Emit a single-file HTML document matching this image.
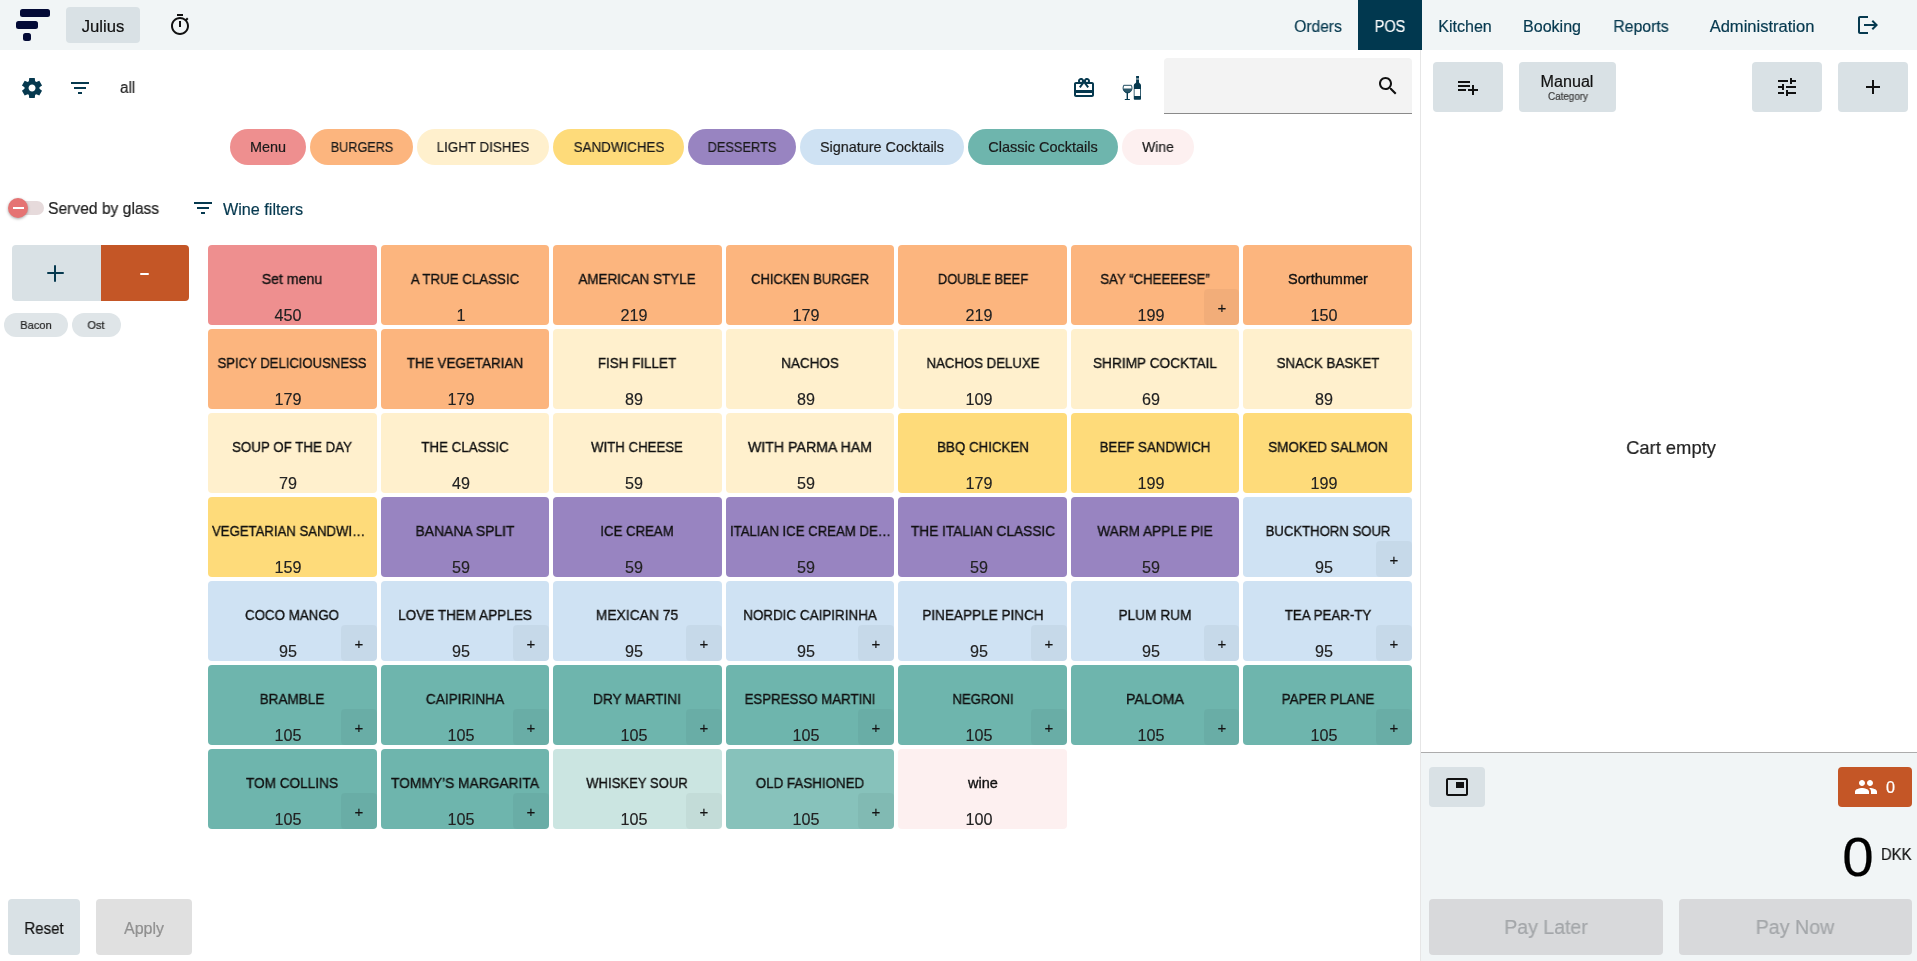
<!DOCTYPE html>
<html lang="en"><head><meta charset="utf-8"><title>POS</title>
<style>
html,body{margin:0;padding:0;}
body{width:1917px;height:961px;position:relative;overflow:hidden;background:#fff;font-family:"Liberation Sans",sans-serif;color:#111;font-size:16px;}
.abs,.ic,.t{position:absolute;}
.t{white-space:nowrap;will-change:transform;-webkit-text-stroke:0.2px currentColor;}
#hdr{left:0;top:0;width:1917px;height:50px;background:#f1f5f6;}
.pill{top:129px;height:36px;border-radius:18px;}
.btn{background:#d9e1e5;border-radius:4px;}
.tile{position:absolute;width:168.57px;height:80px;border-radius:4px;overflow:hidden;}
.tile .t{-webkit-text-stroke:0.35px #111;}
.tile .p{-webkit-text-stroke:0;}
.tile .a{position:absolute;right:0;bottom:0;width:35.8px;height:35.8px;border-radius:4px;background:rgba(0,0,0,0.04);}
.tile .a i{position:absolute;background:#111;}
</style></head><body>

<header>
<div id="hdr" class="abs"></div>
<div class="abs" style="left:20px;top:9px;width:30px;height:7.5px;border-radius:2.5px;background:#030a36"></div>
<div class="abs" style="left:16px;top:21.3px;width:22px;height:7.5px;border-radius:2.5px;background:#030a36"></div>
<div class="abs" style="left:23px;top:33.4px;width:8px;height:7.5px;border-radius:2.5px;background:#030a36"></div>
<div class="abs btn" style="left:66px;top:7px;width:74px;height:36px"></div>
<div class="t" style="top:19.46px;font-size:16px;line-height:16px;color:#111;left:103.30px;transform:translateX(-50%) scaleX(1.0386);">Julius</div>
<svg class="ic" style="left:168px;top:13px" width="24" height="24" viewBox="0 0 24 24"><path fill="#111" d="M15 1H9v2h6V1zm-4 13h2V8h-2v6zm8.03-6.61l1.42-1.42c-.43-.51-.9-.99-1.41-1.41l-1.42 1.42C16.07 4.74 14.12 4 12 4c-4.97 0-9 4.03-9 9s4.02 9 9 9 9-4.03 9-9c0-2.12-.74-4.07-1.97-5.61zM12 20c-3.87 0-7-3.13-7-7s3.13-7 7-7 7 3.13 7 7-3.13 7-7 7z"/></svg>
<div class="abs" style="left:1358px;top:0;width:64px;height:50px;background:#01384f"></div>
<nav>
<div class="t" style="top:19.46px;font-size:16px;line-height:16px;color:#06394f;left:1317.90px;transform:translateX(-50%) scaleX(0.9726);">Orders</div>
<div class="t" style="top:19.46px;font-size:16px;line-height:16px;color:#fff;left:1389.60px;transform:translateX(-50%) scaleX(0.9053);">POS</div>
<div class="t" style="top:19.46px;font-size:16px;line-height:16px;color:#06394f;left:1464.60px;transform:translateX(-50%) scaleX(1.0051);">Kitchen</div>
<div class="t" style="top:19.46px;font-size:16px;line-height:16px;color:#06394f;left:1552.10px;transform:translateX(-50%) scaleX(1.0033);">Booking</div>
<div class="t" style="top:19.46px;font-size:16px;line-height:16px;color:#06394f;left:1640.90px;transform:translateX(-50%) scaleX(0.9875);">Reports</div>
<div class="t" style="top:19.46px;font-size:16px;line-height:16px;color:#06394f;left:1762.40px;transform:translateX(-50%) scaleX(1.0329);">Administration</div>
</nav>
<svg class="ic" style="left:1856px;top:13px" width="24" height="24" viewBox="0 0 24 24"><path fill="#06394f" d="M17 7l-1.41 1.41L18.17 11H8v2h10.17l-2.58 2.58L17 17l5-5zM4 5h8V3H4c-1.1 0-2 .9-2 2v14c0 1.1.9 2 2 2h8v-2H4V5z"/></svg>
</header>
<main>
<svg class="ic" style="left:20px;top:76px" width="24" height="24" viewBox="0 -960 960 960"><path fill="#06394f" d="m370-80-16-128q-13-5-24.500-12T307-235l-119 50L78-375l103-78q-1-7-1-13.500v-27q0-6.500 1-13.500L78-585l110-190 119 50q11-8 23-15t24-12l16-128h220l16 128q13 5 24.500 12t22.500 15l119-50 110 190-103 78q1 7 1 13.500v27q0 6.500-2 13.500l103 78-110 190-118-50q-11 8-23 15t-24 12L590-80H370Zm112-260q58 0 99-41t41-99q0-58-41-99t-99-41q-59 0-99.500 41T342-480q0 58 40.500 99t99.500 41Z"/></svg>
<svg class="ic" style="left:68px;top:76px" width="24" height="24" viewBox="0 0 24 24"><path fill="#06394f" d="M10 18h4v-2h-4v2zM3 6v2h18V6H3zm3 7h12v-2H6v2z"/></svg>
<div class="t" style="top:80.46px;font-size:16px;line-height:16px;color:#222;left:119.70px;transform-origin:0 50%;transform:scaleX(0.9500);">all</div>
<svg class="ic" style="left:1072px;top:76px" width="24" height="24" viewBox="0 0 24 24"><path fill="#06394f" d="M20 6h-2.18c.11-.31.18-.65.18-1 0-1.66-1.34-3-3-3-1.05 0-1.96.54-2.5 1.35l-.5.67-.5-.68C10.96 2.54 10.05 2 9 2 7.34 2 6 3.34 6 5c0 .35.07.69.18 1H4c-1.11 0-1.99.89-1.99 2L2 19c0 1.11.89 2 2 2h16c1.11 0 2-.89 2-2V8c0-1.11-.89-2-2-2zm-5-2c.55 0 1 .45 1 1s-.45 1-1 1-1-.45-1-1 .45-1 1-1zM9 4c.55 0 1 .45 1 1s-.45 1-1 1-1-.45-1-1 .45-1 1-1zm11 15H4v-2h16v2zm0-5H4V8h5.08L7 10.83 8.62 12 11 8.76l1-1.36 1 1.36L15.38 12 17 10.83 14.92 8H20v6z"/></svg>
<svg class="ic" style="left:1120px;top:74px" width="24" height="28" viewBox="0 0 24 28">
<path fill="none" stroke="#06394f" stroke-width="0.9" d="M3.700 11.300h7.700c1 2.300.8 4.900-.9 6.400-.9.800-1.900 1.200-2.950 1.200s-2.050-.4-2.950-1.200c-1.700-1.500-1.900-4.100-.9-6.400z"/>
<path fill="#06394f" fill-opacity="0.85" d="M3.300 14.400h8.500c0 1.300-.4 2.500-1.300 3.400-.9.800-1.900 1.200-2.950 1.200s-2.050-.4-2.950-1.200c-.9-.9-1.300-2.100-1.300-3.400z"/>
<rect x="6.600" y="18.600" width="1.400" height="6.600" fill="#06394f"/>
<rect x="4.700" y="24.900" width="5.300" height="1.100" rx="0.550" fill="#06394f"/>
<path fill="#06394f" d="M16.100 2h2.900v6.300c0 .9 2 1.500 2 3.200v13.500c0 .5-.3.800-.8.800h-5.600c-.5 0-.8-.3-.8-.8V11.500c0-1.700 2.300-2.300 2.300-3.200z"/>
<rect x="14.700" y="15" width="5.500" height="7" fill="#fff"/>
<rect x="13.800" y="15" width="0.900" height="7" fill="#93a9b3"/>
<rect x="16.100" y="4.100" width="2.900" height="1.700" fill="#7f99a5"/>
</svg>
<div class="abs" style="left:1164px;top:58px;width:248px;height:56px;background:#f3f3f3;border-radius:4px 4px 0 0;border-bottom:1px solid #8a8a8a;box-sizing:border-box"></div>
<svg class="ic" style="left:1375.5px;top:73.7px" width="24" height="24" viewBox="0 0 24 24"><path fill="#111" d="M15.5 14h-.79l-.28-.27C15.41 12.59 16 11.11 16 9.5 16 5.91 13.09 3 9.5 3S3 5.91 3 9.5 5.91 16 9.5 16c1.61 0 3.09-.59 4.23-1.57l.27.28v.79l5 4.99L20.49 19l-4.99-5zm-6 0C7.01 14 5 11.99 5 9.5S7.01 5 9.5 5 14 7.01 14 9.5 11.99 14 9.5 14z"/></svg>
<div class="abs pill" style="left:230px;width:76px;background:#ee8f8f"></div>
<div class="t" style="top:139.81px;font-size:14.4px;line-height:14.4px;color:#1a1a1a;left:268.00px;transform:translateX(-50%) scaleX(1.0018);">Menu</div>
<div class="abs pill" style="left:310px;width:103px;background:#fcb57e"></div>
<div class="t" style="top:139.81px;font-size:14.4px;line-height:14.4px;color:#1a1a1a;left:361.50px;transform:translateX(-50%) scaleX(0.8787);">BURGERS</div>
<div class="abs pill" style="left:417px;width:132px;background:#fff0cd"></div>
<div class="t" style="top:139.81px;font-size:14.4px;line-height:14.4px;color:#1a1a1a;left:483.00px;transform:translateX(-50%) scaleX(0.9304);">LIGHT DISHES</div>
<div class="abs pill" style="left:553px;width:131px;background:#fedb7a"></div>
<div class="t" style="top:139.81px;font-size:14.4px;line-height:14.4px;color:#1a1a1a;left:618.50px;transform:translateX(-50%) scaleX(0.9293);">SANDWICHES</div>
<div class="abs pill" style="left:688px;width:108px;background:#9884c1"></div>
<div class="t" style="top:139.81px;font-size:14.4px;line-height:14.4px;color:#1a1a1a;left:742.00px;transform:translateX(-50%) scaleX(0.8907);">DESSERTS</div>
<div class="abs pill" style="left:800px;width:164px;background:#cfe2f3"></div>
<div class="t" style="top:139.81px;font-size:14.4px;line-height:14.4px;color:#1a1a1a;left:882.00px;transform:translateX(-50%) scaleX(0.9994);">Signature Cocktails</div>
<div class="abs pill" style="left:968px;width:150px;background:#6eb5ad"></div>
<div class="t" style="top:139.81px;font-size:14.4px;line-height:14.4px;color:#1a1a1a;left:1043.00px;transform:translateX(-50%) scaleX(1.0065);">Classic Cocktails</div>
<div class="abs pill" style="left:1122px;width:72px;background:#fdf0f0"></div>
<div class="t" style="top:139.81px;font-size:14.4px;line-height:14.4px;color:#1a1a1a;left:1158.00px;transform:translateX(-50%) scaleX(0.9707);">Wine</div>
<div class="abs" style="left:12px;top:201.4px;width:32px;height:13.4px;border-radius:7px;background:#e6dadb"></div>
<div class="abs" style="left:8px;top:198px;width:20px;height:20px;border-radius:50%;background:#e57373;box-shadow:0 1px 3px rgba(0,0,0,.35)"></div>
<div class="abs" style="left:12.5px;top:206.8px;width:11.4px;height:2.4px;background:#fff"></div>
<div class="t" style="top:201.46px;font-size:16px;line-height:16px;color:#222;left:47.70px;transform-origin:0 50%;transform:scaleX(0.9764);">Served by glass</div>
<svg class="ic" style="left:191.2px;top:196px" width="24" height="24" viewBox="0 0 24 24"><path fill="#06394f" d="M10 18h4v-2h-4v2zM3 6v2h18V6H3zm3 7h12v-2H6v2z"/></svg>
<div class="t" style="top:202.16px;font-size:16px;line-height:16px;color:#06394f;left:223.30px;transform-origin:0 50%;transform:scaleX(1.0115);">Wine filters</div>
<div class="abs" style="left:12px;top:245px;width:89px;height:56px;background:#d9e1e5;border-radius:4px 0 0 4px"></div>
<div class="abs" style="left:101px;top:245px;width:88px;height:56px;background:#c45626;border-radius:0 4px 4px 0"></div>
<div class="abs" style="left:47.2px;top:272px;width:16.4px;height:2.2px;border-radius:1px;background:#06394f"></div><div class="abs" style="left:54.3px;top:265px;width:2.2px;height:16.8px;border-radius:1px;background:#06394f"></div>
<div class="abs" style="left:140.2px;top:272.7px;width:9px;height:2.5px;border-radius:1.2px;background:#fff"></div>
<div class="abs" style="left:4px;top:313px;width:64px;height:24px;border-radius:12px;background:#dfe5e8"></div>
<div class="t" style="top:319.72px;font-size:11.2px;line-height:11.2px;color:#222;left:36.00px;transform:translateX(-50%) scaleX(0.9918);">Bacon</div>
<div class="abs" style="left:72px;top:313px;width:49px;height:24px;border-radius:12px;background:#dfe5e8"></div>
<div class="t" style="top:319.72px;font-size:11.2px;line-height:11.2px;color:#222;left:96.00px;transform:translateX(-50%) scaleX(0.9834);">Ost</div>
<div class="tile" style="left:208.00px;top:245px;background:#ee8f8f"><div class="t" style="top:26.81px;font-size:14.4px;line-height:14.4px;color:#111;left:84.28px;transform:translateX(-50%) scaleX(0.9829);">Set menu</div><div class="t" style="top:63.46px;font-size:16px;line-height:16px;color:#222;left:80.38px;transform:translateX(-50%) scaleX(1.0096);-webkit-text-stroke:0.15px #222;">450</div></div>
<div class="tile" style="left:380.57px;top:245px;background:#fcb57e"><div class="t" style="top:26.81px;font-size:14.4px;line-height:14.4px;color:#111;left:84.28px;transform:translateX(-50%) scaleX(0.9235);">A TRUE CLASSIC</div><div class="t" style="top:63.46px;font-size:16px;line-height:16px;color:#222;left:80.38px;transform:translateX(-50%) scaleX(1.0096);-webkit-text-stroke:0.15px #222;">1</div></div>
<div class="tile" style="left:553.14px;top:245px;background:#fcb57e"><div class="t" style="top:26.81px;font-size:14.4px;line-height:14.4px;color:#111;left:84.28px;transform:translateX(-50%) scaleX(0.9332);">AMERICAN STYLE</div><div class="t" style="top:63.46px;font-size:16px;line-height:16px;color:#222;left:80.38px;transform:translateX(-50%) scaleX(1.0096);-webkit-text-stroke:0.15px #222;">219</div></div>
<div class="tile" style="left:725.72px;top:245px;background:#fcb57e"><div class="t" style="top:26.81px;font-size:14.4px;line-height:14.4px;color:#111;left:84.28px;transform:translateX(-50%) scaleX(0.9049);">CHICKEN BURGER</div><div class="t" style="top:63.46px;font-size:16px;line-height:16px;color:#222;left:80.38px;transform:translateX(-50%) scaleX(1.0096);-webkit-text-stroke:0.15px #222;">179</div></div>
<div class="tile" style="left:898.29px;top:245px;background:#fcb57e"><div class="t" style="top:26.81px;font-size:14.4px;line-height:14.4px;color:#111;left:84.28px;transform:translateX(-50%) scaleX(0.8969);">DOUBLE BEEF</div><div class="t" style="top:63.46px;font-size:16px;line-height:16px;color:#222;left:80.38px;transform:translateX(-50%) scaleX(1.0096);-webkit-text-stroke:0.15px #222;">219</div></div>
<div class="tile" style="left:1070.86px;top:245px;background:#fcb57e"><div class="t" style="top:26.81px;font-size:14.4px;line-height:14.4px;color:#111;left:84.28px;transform:translateX(-50%) scaleX(0.9161);">SAY “CHEEEESE”</div><div class="t" style="top:63.46px;font-size:16px;line-height:16px;color:#222;left:80.38px;transform:translateX(-50%) scaleX(1.0096);-webkit-text-stroke:0.15px #222;">199</div><div class="a"></div><div class="t" style="top:54.80px;font-size:15px;line-height:15px;color:#111;left:150.77px;transform:translateX(-50%) scaleX(1.0000);-webkit-text-stroke:0.15px #222;">+</div></div>
<div class="tile" style="left:1243.43px;top:245px;background:#fcb57e"><div class="t" style="top:26.81px;font-size:14.4px;line-height:14.4px;color:#111;left:84.28px;transform:translateX(-50%) scaleX(1.0092);">Sorthummer</div><div class="t" style="top:63.46px;font-size:16px;line-height:16px;color:#222;left:80.38px;transform:translateX(-50%) scaleX(1.0096);-webkit-text-stroke:0.15px #222;">150</div></div>
<div class="tile" style="left:208.00px;top:329px;background:#fcb57e"><div class="t" style="top:26.81px;font-size:14.4px;line-height:14.4px;color:#111;left:84.28px;transform:translateX(-50%) scaleX(0.9099);">SPICY DELICIOUSNESS</div><div class="t" style="top:63.46px;font-size:16px;line-height:16px;color:#222;left:80.38px;transform:translateX(-50%) scaleX(1.0096);-webkit-text-stroke:0.15px #222;">179</div></div>
<div class="tile" style="left:380.57px;top:329px;background:#fcb57e"><div class="t" style="top:26.81px;font-size:14.4px;line-height:14.4px;color:#111;left:84.28px;transform:translateX(-50%) scaleX(0.9344);">THE VEGETARIAN</div><div class="t" style="top:63.46px;font-size:16px;line-height:16px;color:#222;left:80.38px;transform:translateX(-50%) scaleX(1.0096);-webkit-text-stroke:0.15px #222;">179</div></div>
<div class="tile" style="left:553.14px;top:329px;background:#fff0cd"><div class="t" style="top:26.81px;font-size:14.4px;line-height:14.4px;color:#111;left:84.28px;transform:translateX(-50%) scaleX(0.9332);">FISH FILLET</div><div class="t" style="top:63.46px;font-size:16px;line-height:16px;color:#222;left:80.38px;transform:translateX(-50%) scaleX(1.0096);-webkit-text-stroke:0.15px #222;">89</div></div>
<div class="tile" style="left:725.72px;top:329px;background:#fff0cd"><div class="t" style="top:26.81px;font-size:14.4px;line-height:14.4px;color:#111;left:84.28px;transform:translateX(-50%) scaleX(0.9373);">NACHOS</div><div class="t" style="top:63.46px;font-size:16px;line-height:16px;color:#222;left:80.38px;transform:translateX(-50%) scaleX(1.0096);-webkit-text-stroke:0.15px #222;">89</div></div>
<div class="tile" style="left:898.29px;top:329px;background:#fff0cd"><div class="t" style="top:26.81px;font-size:14.4px;line-height:14.4px;color:#111;left:84.28px;transform:translateX(-50%) scaleX(0.9189);">NACHOS DELUXE</div><div class="t" style="top:63.46px;font-size:16px;line-height:16px;color:#222;left:80.38px;transform:translateX(-50%) scaleX(1.0096);-webkit-text-stroke:0.15px #222;">109</div></div>
<div class="tile" style="left:1070.86px;top:329px;background:#fff0cd"><div class="t" style="top:26.81px;font-size:14.4px;line-height:14.4px;color:#111;left:84.28px;transform:translateX(-50%) scaleX(0.9499);">SHRIMP COCKTAIL</div><div class="t" style="top:63.46px;font-size:16px;line-height:16px;color:#222;left:80.38px;transform:translateX(-50%) scaleX(1.0096);-webkit-text-stroke:0.15px #222;">69</div></div>
<div class="tile" style="left:1243.43px;top:329px;background:#fff0cd"><div class="t" style="top:26.81px;font-size:14.4px;line-height:14.4px;color:#111;left:84.28px;transform:translateX(-50%) scaleX(0.9315);">SNACK BASKET</div><div class="t" style="top:63.46px;font-size:16px;line-height:16px;color:#222;left:80.38px;transform:translateX(-50%) scaleX(1.0096);-webkit-text-stroke:0.15px #222;">89</div></div>
<div class="tile" style="left:208.00px;top:413px;background:#fff0cd"><div class="t" style="top:26.81px;font-size:14.4px;line-height:14.4px;color:#111;left:84.28px;transform:translateX(-50%) scaleX(0.9253);">SOUP OF THE DAY</div><div class="t" style="top:63.46px;font-size:16px;line-height:16px;color:#222;left:80.38px;transform:translateX(-50%) scaleX(1.0096);-webkit-text-stroke:0.15px #222;">79</div></div>
<div class="tile" style="left:380.57px;top:413px;background:#fff0cd"><div class="t" style="top:26.81px;font-size:14.4px;line-height:14.4px;color:#111;left:84.28px;transform:translateX(-50%) scaleX(0.9267);">THE CLASSIC</div><div class="t" style="top:63.46px;font-size:16px;line-height:16px;color:#222;left:80.38px;transform:translateX(-50%) scaleX(1.0096);-webkit-text-stroke:0.15px #222;">49</div></div>
<div class="tile" style="left:553.14px;top:413px;background:#fff0cd"><div class="t" style="top:26.81px;font-size:14.4px;line-height:14.4px;color:#111;left:84.28px;transform:translateX(-50%) scaleX(0.9186);">WITH CHEESE</div><div class="t" style="top:63.46px;font-size:16px;line-height:16px;color:#222;left:80.38px;transform:translateX(-50%) scaleX(1.0096);-webkit-text-stroke:0.15px #222;">59</div></div>
<div class="tile" style="left:725.72px;top:413px;background:#fff0cd"><div class="t" style="top:26.81px;font-size:14.4px;line-height:14.4px;color:#111;left:84.28px;transform:translateX(-50%) scaleX(0.9848);">WITH PARMA HAM</div><div class="t" style="top:63.46px;font-size:16px;line-height:16px;color:#222;left:80.38px;transform:translateX(-50%) scaleX(1.0096);-webkit-text-stroke:0.15px #222;">59</div></div>
<div class="tile" style="left:898.29px;top:413px;background:#fedb7a"><div class="t" style="top:26.81px;font-size:14.4px;line-height:14.4px;color:#111;left:84.28px;transform:translateX(-50%) scaleX(0.9254);">BBQ CHICKEN</div><div class="t" style="top:63.46px;font-size:16px;line-height:16px;color:#222;left:80.38px;transform:translateX(-50%) scaleX(1.0096);-webkit-text-stroke:0.15px #222;">179</div></div>
<div class="tile" style="left:1070.86px;top:413px;background:#fedb7a"><div class="t" style="top:26.81px;font-size:14.4px;line-height:14.4px;color:#111;left:84.28px;transform:translateX(-50%) scaleX(0.9236);">BEEF SANDWICH</div><div class="t" style="top:63.46px;font-size:16px;line-height:16px;color:#222;left:80.38px;transform:translateX(-50%) scaleX(1.0096);-webkit-text-stroke:0.15px #222;">199</div></div>
<div class="tile" style="left:1243.43px;top:413px;background:#fedb7a"><div class="t" style="top:26.81px;font-size:14.4px;line-height:14.4px;color:#111;left:84.28px;transform:translateX(-50%) scaleX(0.9405);">SMOKED SALMON</div><div class="t" style="top:63.46px;font-size:16px;line-height:16px;color:#222;left:80.38px;transform:translateX(-50%) scaleX(1.0096);-webkit-text-stroke:0.15px #222;">199</div></div>
<div class="tile" style="left:208.00px;top:497px;background:#fedb7a"><div class="t" style="top:26.81px;font-size:14.4px;line-height:14.4px;color:#111;left:4.00px;transform-origin:0 50%;transform:scaleX(0.9139);">VEGETARIAN SANDWI…</div><div class="t" style="top:63.46px;font-size:16px;line-height:16px;color:#222;left:80.38px;transform:translateX(-50%) scaleX(1.0096);-webkit-text-stroke:0.15px #222;">159</div></div>
<div class="tile" style="left:380.57px;top:497px;background:#9884c1"><div class="t" style="top:26.81px;font-size:14.4px;line-height:14.4px;color:#111;left:84.28px;transform:translateX(-50%) scaleX(0.9676);">BANANA SPLIT</div><div class="t" style="top:63.46px;font-size:16px;line-height:16px;color:#222;left:80.38px;transform:translateX(-50%) scaleX(1.0096);-webkit-text-stroke:0.15px #222;">59</div></div>
<div class="tile" style="left:553.14px;top:497px;background:#9884c1"><div class="t" style="top:26.81px;font-size:14.4px;line-height:14.4px;color:#111;left:84.28px;transform:translateX(-50%) scaleX(0.9177);">ICE CREAM</div><div class="t" style="top:63.46px;font-size:16px;line-height:16px;color:#222;left:80.38px;transform:translateX(-50%) scaleX(1.0096);-webkit-text-stroke:0.15px #222;">59</div></div>
<div class="tile" style="left:725.72px;top:497px;background:#9884c1"><div class="t" style="top:26.81px;font-size:14.4px;line-height:14.4px;color:#111;left:4.00px;transform-origin:0 50%;transform:scaleX(0.9163);">ITALIAN ICE CREAM DE…</div><div class="t" style="top:63.46px;font-size:16px;line-height:16px;color:#222;left:80.38px;transform:translateX(-50%) scaleX(1.0096);-webkit-text-stroke:0.15px #222;">59</div></div>
<div class="tile" style="left:898.29px;top:497px;background:#9884c1"><div class="t" style="top:26.81px;font-size:14.4px;line-height:14.4px;color:#111;left:84.28px;transform:translateX(-50%) scaleX(0.9507);">THE ITALIAN CLASSIC</div><div class="t" style="top:63.46px;font-size:16px;line-height:16px;color:#222;left:80.38px;transform:translateX(-50%) scaleX(1.0096);-webkit-text-stroke:0.15px #222;">59</div></div>
<div class="tile" style="left:1070.86px;top:497px;background:#9884c1"><div class="t" style="top:26.81px;font-size:14.4px;line-height:14.4px;color:#111;left:84.28px;transform:translateX(-50%) scaleX(0.9468);">WARM APPLE PIE</div><div class="t" style="top:63.46px;font-size:16px;line-height:16px;color:#222;left:80.38px;transform:translateX(-50%) scaleX(1.0096);-webkit-text-stroke:0.15px #222;">59</div></div>
<div class="tile" style="left:1243.43px;top:497px;background:#cfe2f3"><div class="t" style="top:26.81px;font-size:14.4px;line-height:14.4px;color:#111;left:84.28px;transform:translateX(-50%) scaleX(0.9123);">BUCKTHORN SOUR</div><div class="t" style="top:63.46px;font-size:16px;line-height:16px;color:#222;left:80.38px;transform:translateX(-50%) scaleX(1.0096);-webkit-text-stroke:0.15px #222;">95</div><div class="a"></div><div class="t" style="top:54.80px;font-size:15px;line-height:15px;color:#111;left:150.77px;transform:translateX(-50%) scaleX(1.0000);-webkit-text-stroke:0.15px #222;">+</div></div>
<div class="tile" style="left:208.00px;top:581px;background:#cfe2f3"><div class="t" style="top:26.81px;font-size:14.4px;line-height:14.4px;color:#111;left:84.28px;transform:translateX(-50%) scaleX(0.9257);">COCO MANGO</div><div class="t" style="top:63.46px;font-size:16px;line-height:16px;color:#222;left:80.38px;transform:translateX(-50%) scaleX(1.0096);-webkit-text-stroke:0.15px #222;">95</div><div class="a"></div><div class="t" style="top:54.80px;font-size:15px;line-height:15px;color:#111;left:150.77px;transform:translateX(-50%) scaleX(1.0000);-webkit-text-stroke:0.15px #222;">+</div></div>
<div class="tile" style="left:380.57px;top:581px;background:#cfe2f3"><div class="t" style="top:26.81px;font-size:14.4px;line-height:14.4px;color:#111;left:84.28px;transform:translateX(-50%) scaleX(0.9408);">LOVE THEM APPLES</div><div class="t" style="top:63.46px;font-size:16px;line-height:16px;color:#222;left:80.38px;transform:translateX(-50%) scaleX(1.0096);-webkit-text-stroke:0.15px #222;">95</div><div class="a"></div><div class="t" style="top:54.80px;font-size:15px;line-height:15px;color:#111;left:150.77px;transform:translateX(-50%) scaleX(1.0000);-webkit-text-stroke:0.15px #222;">+</div></div>
<div class="tile" style="left:553.14px;top:581px;background:#cfe2f3"><div class="t" style="top:26.81px;font-size:14.4px;line-height:14.4px;color:#111;left:84.28px;transform:translateX(-50%) scaleX(0.9631);">MEXICAN 75</div><div class="t" style="top:63.46px;font-size:16px;line-height:16px;color:#222;left:80.38px;transform:translateX(-50%) scaleX(1.0096);-webkit-text-stroke:0.15px #222;">95</div><div class="a"></div><div class="t" style="top:54.80px;font-size:15px;line-height:15px;color:#111;left:150.77px;transform:translateX(-50%) scaleX(1.0000);-webkit-text-stroke:0.15px #222;">+</div></div>
<div class="tile" style="left:725.72px;top:581px;background:#cfe2f3"><div class="t" style="top:26.81px;font-size:14.4px;line-height:14.4px;color:#111;left:84.28px;transform:translateX(-50%) scaleX(0.9338);">NORDIC CAIPIRINHA</div><div class="t" style="top:63.46px;font-size:16px;line-height:16px;color:#222;left:80.38px;transform:translateX(-50%) scaleX(1.0096);-webkit-text-stroke:0.15px #222;">95</div><div class="a"></div><div class="t" style="top:54.80px;font-size:15px;line-height:15px;color:#111;left:150.77px;transform:translateX(-50%) scaleX(1.0000);-webkit-text-stroke:0.15px #222;">+</div></div>
<div class="tile" style="left:898.29px;top:581px;background:#cfe2f3"><div class="t" style="top:26.81px;font-size:14.4px;line-height:14.4px;color:#111;left:84.28px;transform:translateX(-50%) scaleX(0.9425);">PINEAPPLE PINCH</div><div class="t" style="top:63.46px;font-size:16px;line-height:16px;color:#222;left:80.38px;transform:translateX(-50%) scaleX(1.0096);-webkit-text-stroke:0.15px #222;">95</div><div class="a"></div><div class="t" style="top:54.80px;font-size:15px;line-height:15px;color:#111;left:150.77px;transform:translateX(-50%) scaleX(1.0000);-webkit-text-stroke:0.15px #222;">+</div></div>
<div class="tile" style="left:1070.86px;top:581px;background:#cfe2f3"><div class="t" style="top:26.81px;font-size:14.4px;line-height:14.4px;color:#111;left:84.28px;transform:translateX(-50%) scaleX(0.9515);">PLUM RUM</div><div class="t" style="top:63.46px;font-size:16px;line-height:16px;color:#222;left:80.38px;transform:translateX(-50%) scaleX(1.0096);-webkit-text-stroke:0.15px #222;">95</div><div class="a"></div><div class="t" style="top:54.80px;font-size:15px;line-height:15px;color:#111;left:150.77px;transform:translateX(-50%) scaleX(1.0000);-webkit-text-stroke:0.15px #222;">+</div></div>
<div class="tile" style="left:1243.43px;top:581px;background:#cfe2f3"><div class="t" style="top:26.81px;font-size:14.4px;line-height:14.4px;color:#111;left:84.28px;transform:translateX(-50%) scaleX(0.9236);">TEA PEAR-TY</div><div class="t" style="top:63.46px;font-size:16px;line-height:16px;color:#222;left:80.38px;transform:translateX(-50%) scaleX(1.0096);-webkit-text-stroke:0.15px #222;">95</div><div class="a"></div><div class="t" style="top:54.80px;font-size:15px;line-height:15px;color:#111;left:150.77px;transform:translateX(-50%) scaleX(1.0000);-webkit-text-stroke:0.15px #222;">+</div></div>
<div class="tile" style="left:208.00px;top:665px;background:#6eb5ad"><div class="t" style="top:26.81px;font-size:14.4px;line-height:14.4px;color:#111;left:84.28px;transform:translateX(-50%) scaleX(0.9399);">BRAMBLE</div><div class="t" style="top:63.46px;font-size:16px;line-height:16px;color:#222;left:80.38px;transform:translateX(-50%) scaleX(1.0096);-webkit-text-stroke:0.15px #222;">105</div><div class="a"></div><div class="t" style="top:54.80px;font-size:15px;line-height:15px;color:#111;left:150.77px;transform:translateX(-50%) scaleX(1.0000);-webkit-text-stroke:0.15px #222;">+</div></div>
<div class="tile" style="left:380.57px;top:665px;background:#6eb5ad"><div class="t" style="top:26.81px;font-size:14.4px;line-height:14.4px;color:#111;left:84.28px;transform:translateX(-50%) scaleX(0.9512);">CAIPIRINHA</div><div class="t" style="top:63.46px;font-size:16px;line-height:16px;color:#222;left:80.38px;transform:translateX(-50%) scaleX(1.0096);-webkit-text-stroke:0.15px #222;">105</div><div class="a"></div><div class="t" style="top:54.80px;font-size:15px;line-height:15px;color:#111;left:150.77px;transform:translateX(-50%) scaleX(1.0000);-webkit-text-stroke:0.15px #222;">+</div></div>
<div class="tile" style="left:553.14px;top:665px;background:#6eb5ad"><div class="t" style="top:26.81px;font-size:14.4px;line-height:14.4px;color:#111;left:84.28px;transform:translateX(-50%) scaleX(0.9484);">DRY MARTINI</div><div class="t" style="top:63.46px;font-size:16px;line-height:16px;color:#222;left:80.38px;transform:translateX(-50%) scaleX(1.0096);-webkit-text-stroke:0.15px #222;">105</div><div class="a"></div><div class="t" style="top:54.80px;font-size:15px;line-height:15px;color:#111;left:150.77px;transform:translateX(-50%) scaleX(1.0000);-webkit-text-stroke:0.15px #222;">+</div></div>
<div class="tile" style="left:725.72px;top:665px;background:#6eb5ad"><div class="t" style="top:26.81px;font-size:14.4px;line-height:14.4px;color:#111;left:84.28px;transform:translateX(-50%) scaleX(0.9210);">ESPRESSO MARTINI</div><div class="t" style="top:63.46px;font-size:16px;line-height:16px;color:#222;left:80.38px;transform:translateX(-50%) scaleX(1.0096);-webkit-text-stroke:0.15px #222;">105</div><div class="a"></div><div class="t" style="top:54.80px;font-size:15px;line-height:15px;color:#111;left:150.77px;transform:translateX(-50%) scaleX(1.0000);-webkit-text-stroke:0.15px #222;">+</div></div>
<div class="tile" style="left:898.29px;top:665px;background:#6eb5ad"><div class="t" style="top:26.81px;font-size:14.4px;line-height:14.4px;color:#111;left:84.28px;transform:translateX(-50%) scaleX(0.9109);">NEGRONI</div><div class="t" style="top:63.46px;font-size:16px;line-height:16px;color:#222;left:80.38px;transform:translateX(-50%) scaleX(1.0096);-webkit-text-stroke:0.15px #222;">105</div><div class="a"></div><div class="t" style="top:54.80px;font-size:15px;line-height:15px;color:#111;left:150.77px;transform:translateX(-50%) scaleX(1.0000);-webkit-text-stroke:0.15px #222;">+</div></div>
<div class="tile" style="left:1070.86px;top:665px;background:#6eb5ad"><div class="t" style="top:26.81px;font-size:14.4px;line-height:14.4px;color:#111;left:84.28px;transform:translateX(-50%) scaleX(0.9853);">PALOMA</div><div class="t" style="top:63.46px;font-size:16px;line-height:16px;color:#222;left:80.38px;transform:translateX(-50%) scaleX(1.0096);-webkit-text-stroke:0.15px #222;">105</div><div class="a"></div><div class="t" style="top:54.80px;font-size:15px;line-height:15px;color:#111;left:150.77px;transform:translateX(-50%) scaleX(1.0000);-webkit-text-stroke:0.15px #222;">+</div></div>
<div class="tile" style="left:1243.43px;top:665px;background:#6eb5ad"><div class="t" style="top:26.81px;font-size:14.4px;line-height:14.4px;color:#111;left:84.28px;transform:translateX(-50%) scaleX(0.9382);">PAPER PLANE</div><div class="t" style="top:63.46px;font-size:16px;line-height:16px;color:#222;left:80.38px;transform:translateX(-50%) scaleX(1.0096);-webkit-text-stroke:0.15px #222;">105</div><div class="a"></div><div class="t" style="top:54.80px;font-size:15px;line-height:15px;color:#111;left:150.77px;transform:translateX(-50%) scaleX(1.0000);-webkit-text-stroke:0.15px #222;">+</div></div>
<div class="tile" style="left:208.00px;top:749px;background:#6eb5ad"><div class="t" style="top:26.81px;font-size:14.4px;line-height:14.4px;color:#111;left:84.28px;transform:translateX(-50%) scaleX(0.9463);">TOM COLLINS</div><div class="t" style="top:63.46px;font-size:16px;line-height:16px;color:#222;left:80.38px;transform:translateX(-50%) scaleX(1.0096);-webkit-text-stroke:0.15px #222;">105</div><div class="a"></div><div class="t" style="top:54.80px;font-size:15px;line-height:15px;color:#111;left:150.77px;transform:translateX(-50%) scaleX(1.0000);-webkit-text-stroke:0.15px #222;">+</div></div>
<div class="tile" style="left:380.57px;top:749px;background:#6eb5ad"><div class="t" style="top:26.81px;font-size:14.4px;line-height:14.4px;color:#111;left:84.28px;transform:translateX(-50%) scaleX(0.9572);">TOMMY’S MARGARITA</div><div class="t" style="top:63.46px;font-size:16px;line-height:16px;color:#222;left:80.38px;transform:translateX(-50%) scaleX(1.0096);-webkit-text-stroke:0.15px #222;">105</div><div class="a"></div><div class="t" style="top:54.80px;font-size:15px;line-height:15px;color:#111;left:150.77px;transform:translateX(-50%) scaleX(1.0000);-webkit-text-stroke:0.15px #222;">+</div></div>
<div class="tile" style="left:553.14px;top:749px;background:#cbe5e1"><div class="t" style="top:26.81px;font-size:14.4px;line-height:14.4px;color:#111;left:84.28px;transform:translateX(-50%) scaleX(0.9089);">WHISKEY SOUR</div><div class="t" style="top:63.46px;font-size:16px;line-height:16px;color:#222;left:80.38px;transform:translateX(-50%) scaleX(1.0096);-webkit-text-stroke:0.15px #222;">105</div><div class="a"></div><div class="t" style="top:54.80px;font-size:15px;line-height:15px;color:#111;left:150.77px;transform:translateX(-50%) scaleX(1.0000);-webkit-text-stroke:0.15px #222;">+</div></div>
<div class="tile" style="left:725.72px;top:749px;background:#87c2bb"><div class="t" style="top:26.81px;font-size:14.4px;line-height:14.4px;color:#111;left:84.28px;transform:translateX(-50%) scaleX(0.9290);">OLD FASHIONED</div><div class="t" style="top:63.46px;font-size:16px;line-height:16px;color:#222;left:80.38px;transform:translateX(-50%) scaleX(1.0096);-webkit-text-stroke:0.15px #222;">105</div><div class="a"></div><div class="t" style="top:54.80px;font-size:15px;line-height:15px;color:#111;left:150.77px;transform:translateX(-50%) scaleX(1.0000);-webkit-text-stroke:0.15px #222;">+</div></div>
<div class="tile" style="left:898.29px;top:749px;background:#fdf0f0"><div class="t" style="top:26.81px;font-size:14.4px;line-height:14.4px;color:#111;left:84.28px;transform:translateX(-50%) scaleX(1.0092);">wine</div><div class="t" style="top:63.46px;font-size:16px;line-height:16px;color:#222;left:80.38px;transform:translateX(-50%) scaleX(1.0096);-webkit-text-stroke:0.15px #222;">100</div></div>
<div class="abs btn" style="left:8px;top:899px;width:72px;height:56px"></div>
<div class="t" style="top:920.96px;font-size:16px;line-height:16px;color:#111;left:44.20px;transform:translateX(-50%) scaleX(0.9400);">Reset</div>
<div class="abs" style="left:96px;top:899px;width:96px;height:56px;border-radius:4px;background:#e0e0e0"></div>
<div class="t" style="top:920.96px;font-size:16px;line-height:16px;color:#8e8e8e;left:144.10px;transform:translateX(-50%) scaleX(0.9953);">Apply</div>
</main>
<aside>
<div class="abs" style="left:1420px;top:50px;width:1px;height:911px;background:#e6e6e6"></div>
<div class="abs btn" style="left:1433px;top:62px;width:70px;height:50px"></div>
<svg class="ic" style="left:1455.6px;top:74.6px" width="24" height="24" viewBox="0 0 24 24"><path fill="#111" d="M14 10H2v2h12v-2zm0-4H2v2h12V6zm4 8v-4h-2v4h-4v2h4v4h2v-4h4v-2h-4zM2 16h8v-2H2v2z"/></svg>
<div class="abs btn" style="left:1519px;top:62px;width:97px;height:50px"></div>
<div class="t" style="top:73.66px;font-size:16px;line-height:16px;color:#111;left:1567.40px;transform:translateX(-50%) scaleX(1.0082);">Manual</div>
<div class="t" style="top:91.53px;font-size:10px;line-height:10px;color:#3a3a3a;left:1567.50px;transform:translateX(-50%) scaleX(0.9844);">Category</div>
<div class="abs btn" style="left:1752px;top:62px;width:70px;height:50px"></div>
<svg class="ic" style="left:1775px;top:75px" width="24" height="24" viewBox="0 0 24 24"><path fill="#111" d="M3 17v2h6v-2H3zM3 5v2h10V5H3zm10 16v-2h8v-2h-8v-2h-2v6h2zM7 9v2H3v2h4v2h2V9H7zm14 4v-2H11v2h10zm-6-4h2V7h4V5h-4V3h-2v6z"/></svg>
<div class="abs btn" style="left:1838px;top:62px;width:70px;height:50px"></div>
<svg class="ic" style="left:1861px;top:75px" width="24" height="24" viewBox="0 0 24 24"><path fill="#111" d="M19 13h-6v6h-2v-6H5v-2h6V5h2v6h6v2z"/></svg>
<div class="t" style="top:439.22px;font-size:18.4px;line-height:18.4px;color:#222;left:1670.50px;transform:translateX(-50%) scaleX(0.9969);">Cart empty</div>
<div class="abs" style="left:1421px;top:752px;width:496px;height:209px;background:#f1f5f6;border-top:1px solid #acacac;box-sizing:border-box"></div>
<div class="abs btn" style="left:1429px;top:767px;width:56px;height:40px"></div>
<svg class="ic" style="left:1445px;top:775px" width="24" height="24" viewBox="0 0 24 24"><path fill="#111" d="M19 7h-8v6h8V7zm2-4H3c-1.1 0-2 .9-2 2v14c0 1.1.9 1.98 2 1.98h18c1.1 0 2-.88 2-1.98V5c0-1.1-.9-2-2-2zm0 16.01H3V4.98h18v14.03z"/></svg>
<div class="abs" style="left:1838px;top:767px;width:74px;height:40px;border-radius:4px;background:#c45626"></div>
<svg class="ic" style="left:1853.7px;top:775px" width="24" height="24" viewBox="0 0 24 24"><path fill="#fff" d="M16 11c1.66 0 2.99-1.34 2.99-3S17.66 5 16 5c-1.66 0-3 1.34-3 3s1.34 3 3 3zm-8 0c1.66 0 2.99-1.34 2.99-3S9.66 5 8 5C6.34 5 5 6.34 5 8s1.34 3 3 3zm0 2c-2.33 0-7 1.17-7 3.5V19h14v-2.5c0-2.33-4.67-3.5-7-3.5zm8 0c-.29 0-.62.02-.97.05 1.16.84 1.97 1.97 1.97 3.45V19h6v-2.5c0-2.33-4.67-3.5-7-3.5z"/></svg>
<div class="t" style="top:780.46px;font-size:16px;line-height:16px;color:#fff;left:1886.00px;transform-origin:0 50%;transform:scaleX(1.0096);">0</div>
<div class="t" style="top:828.60px;font-size:56px;line-height:56px;color:#000;left:1857.90px;transform:translateX(-50%) scaleX(1.0096);">0</div>
<div class="t" style="top:847.46px;font-size:16px;line-height:16px;color:#111;left:1880.50px;transform-origin:0 50%;transform:scaleX(0.9288);">DKK</div>
<div class="abs" style="left:1429px;top:899px;width:234px;height:56px;border-radius:4px;background:#d8d9db"></div>
<div class="t" style="top:917.07px;font-size:20px;line-height:20px;color:#a3a6a9;left:1545.70px;transform:translateX(-50%) scaleX(0.9749);">Pay Later</div>
<div class="abs" style="left:1679px;top:899px;width:233px;height:56px;border-radius:4px;background:#d8d9db"></div>
<div class="t" style="top:917.07px;font-size:20px;line-height:20px;color:#a3a6a9;left:1795.20px;transform:translateX(-50%) scaleX(0.9821);">Pay Now</div>
</aside>
</body></html>
